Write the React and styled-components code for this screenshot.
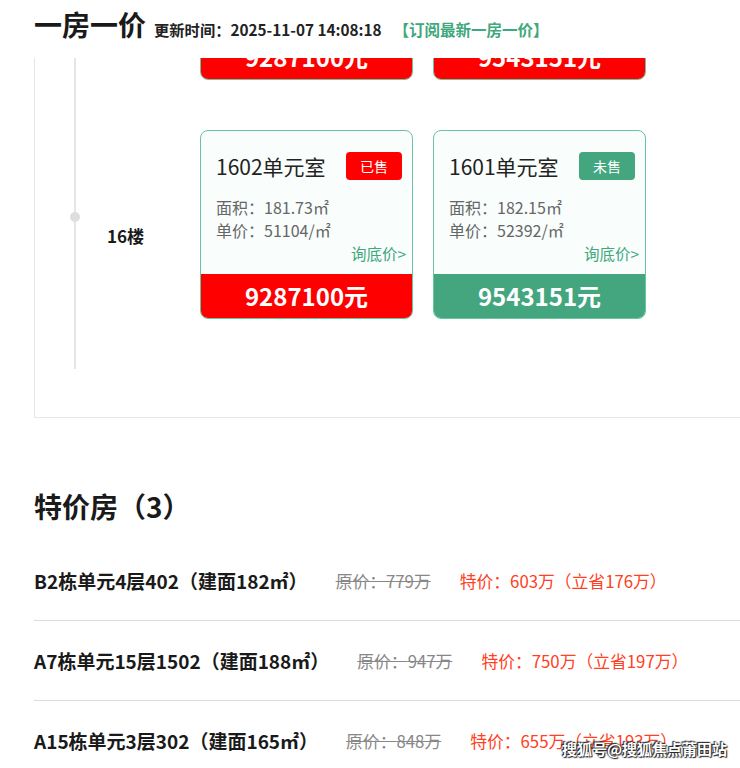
import React from 'react';
import styled, { createGlobalStyle } from 'styled-components';

const GlobalStyle = createGlobalStyle`
  html, body {
    margin: 0;
    padding: 0;
    background: #fff;
    overflow: hidden;
  }
  body {
    font-family: "Noto Sans CJK SC", "Noto Sans", sans-serif;
    color: #222;
  }
`;

const SPage = styled.div`
  position: relative;
  width: 740px;
  height: 768px;
  overflow: hidden;
`;

const SHeader = styled.header`
  display: flex;
  align-items: baseline;
  height: 58px;
  padding-left: 34px;
  box-sizing: border-box;
  background: #fff;
  white-space: nowrap;
`;

const STitle = styled.h1`
  margin: 0;
  font-size: 28px;
  font-weight: 700;
  line-height: 48px;
  color: #1a1a1a;
`;

const SUpdateTime = styled.span`
  margin-left: 8px;
  font-size: 15.3px;
  font-weight: 700;
  color: #222;
`;

const SSubscribe = styled.span`
  margin-left: 12px;
  font-size: 15.5px;
  font-weight: 700;
  color: #3fa87d;
`;

const SViewport = styled.div`
  overflow: hidden;
`;

const SPanel = styled.div`
  margin-top: -167px;
  margin-left: 34px;
  border-left: 1px solid #e6e6e6;
  border-bottom: 1px solid #e6e6e6;
  padding-bottom: 48px;
`;

const SFloorRow = styled.div`
  display: flex;
  padding-bottom: 50px;
`;

const SRail = styled.div`
  position: relative;
  width: 72px;
  flex: none;
  margin-bottom: -50px;

  &::before {
    content: '';
    position: absolute;
    left: 39px;
    top: 0;
    bottom: 0;
    width: 2px;
    background: #e5e5e5;
  }
`;

const SDot = styled.span`
  position: absolute;
  left: 35px;
  top: 82px;
  width: 10px;
  height: 10px;
  border-radius: 50%;
  background: #dedede;
`;

const SFloorLabel = styled.div`
  width: 93px;
  flex: none;
  padding-top: 93px;
  font-size: 17px;
  font-weight: 700;
  color: #1a1a1a;
`;

const SCards = styled.div`
  display: flex;
  gap: 20px;
`;

const SCard = styled.div`
  width: 213px;
  height: 189px;
  box-sizing: border-box;
  display: flex;
  flex-direction: column;
  border: 1px solid #6cc3a0;
  border-radius: 8px;
  background: #f9fdfc;
  overflow: hidden;
`;

const SCardBody = styled.div`
  flex: 1;
  padding: 20px 10px 0 15px;
`;

const SCardHead = styled.div`
  display: flex;
  align-items: center;
  justify-content: space-between;
`;

const SRoom = styled.span`
  font-size: 21px;
  color: #222;
  line-height: 30px;
`;

const SBadge = styled.span`
  width: 56px;
  height: 28px;
  border-radius: 4px;
  background: ${({ $sold }) => ($sold ? '#ff0000' : '#43a67e')};
  color: #fff;
  font-size: 14px;
  line-height: 28px;
  text-align: center;
`;

const SInfo = styled.p`
  margin: 0;
  font-size: 16px;
  line-height: 23px;
  color: #666;

  &:first-of-type {
    margin-top: 15px;
  }
`;

const SAsk = styled.div`
  margin-top: 0;
  margin-right: -4px;
  text-align: right;
  font-size: 15.5px;
  line-height: 22px;
  color: #3fa87d;
`;

const SPriceBar = styled.div`
  height: 44px;
  flex: none;
  background: ${({ $sold }) => ($sold ? '#ff0000' : '#43a67e')};
  color: #fff;
  font-size: 24px;
  font-weight: 700;
  line-height: 44px;
  text-align: center;
`;

const SSection = styled.section`
  padding: 68px 0 0 34px;
`;

const SSectionTitle = styled.h2`
  margin: 0 0 15px;
  font-size: 28px;
  font-weight: 700;
  line-height: 40px;
  color: #1a1a1a;
`;

const SDeal = styled.div`
  display: flex;
  align-items: center;
  height: 79px;
  border-top: ${({ $first }) => ($first ? 'none' : '1px solid #dcdcdc')};
  white-space: nowrap;
`;

const SDealName = styled.span`
  font-size: 19px;
  font-weight: 700;
  color: #1a1a1a;
`;

const SOrigin = styled.span`
  margin-left: 28px;
  font-size: 16.8px;
  color: #888;
  text-decoration: line-through;
`;

const SSpecial = styled.span`
  margin-left: 29px;
  font-size: 16.8px;
  color: #ff4022;
`;

const SWatermark = styled.div`
  position: absolute;
  right: 13px;
  bottom: 9px;
  font-size: 15px;
  font-weight: 700;
  color: #fff;
  text-shadow: 0 0 2px #222, 1px 1px 1px #222, -1px -1px 1px #222;
`;

const floors = [
  {
    floor: '17楼',
    rooms: [
      { room: '1702单元室', sold: true, area: '181.73', unit: '51104', total: '9287100' },
      { room: '1701单元室', sold: true, area: '182.15', unit: '52392', total: '9543151' },
    ],
  },
  {
    floor: '16楼',
    rooms: [
      { room: '1602单元室', sold: true, area: '181.73', unit: '51104', total: '9287100' },
      { room: '1601单元室', sold: false, area: '182.15', unit: '52392', total: '9543151' },
    ],
  },
];

const deals = [
  { name: 'B2栋单元4层402（建面182㎡）', origin: '779万', special: '603万（立省176万）' },
  { name: 'A7栋单元15层1502（建面188㎡）', origin: '947万', special: '750万（立省197万）' },
  { name: 'A15栋单元3层302（建面165㎡）', origin: '848万', special: '655万（立省193万）' },
];

function RoomCard({ room, sold, area, unit, total }) {
  return (
    <SCard>
      <SCardBody>
        <SCardHead>
          <SRoom>{room}</SRoom>
          <SBadge $sold={sold}>{sold ? '已售' : '未售'}</SBadge>
        </SCardHead>
        <SInfo>面积：{area}㎡</SInfo>
        <SInfo>单价：{unit}/㎡</SInfo>
        <SAsk>询底价&gt;</SAsk>
      </SCardBody>
      <SPriceBar $sold={sold}>{total}元</SPriceBar>
    </SCard>
  );
}

export default function App() {
  return (
    <SPage>
      <GlobalStyle />
      <SHeader>
        <STitle>一房一价</STitle>
        <SUpdateTime>更新时间：2025-11-07 14:08:18</SUpdateTime>
        <SSubscribe>【订阅最新一房一价】</SSubscribe>
      </SHeader>

      <SViewport>
        <SPanel>
          {floors.map((f) => (
            <SFloorRow key={f.floor}>
              <SRail>
                <SDot />
              </SRail>
              <SFloorLabel>{f.floor}</SFloorLabel>
              <SCards>
                {f.rooms.map((r) => (
                  <RoomCard key={r.room} {...r} />
                ))}
              </SCards>
            </SFloorRow>
          ))}
        </SPanel>
      </SViewport>

      <SSection>
        <SSectionTitle>特价房（3）</SSectionTitle>
        {deals.map((d, i) => (
          <SDeal key={d.name} $first={i === 0}>
            <SDealName>{d.name}</SDealName>
            <SOrigin>原价：{d.origin}</SOrigin>
            <SSpecial>特价：{d.special}</SSpecial>
          </SDeal>
        ))}
      </SSection>

      <SWatermark>搜狐号@搜狐焦点莆田站</SWatermark>
    </SPage>
  );
}
